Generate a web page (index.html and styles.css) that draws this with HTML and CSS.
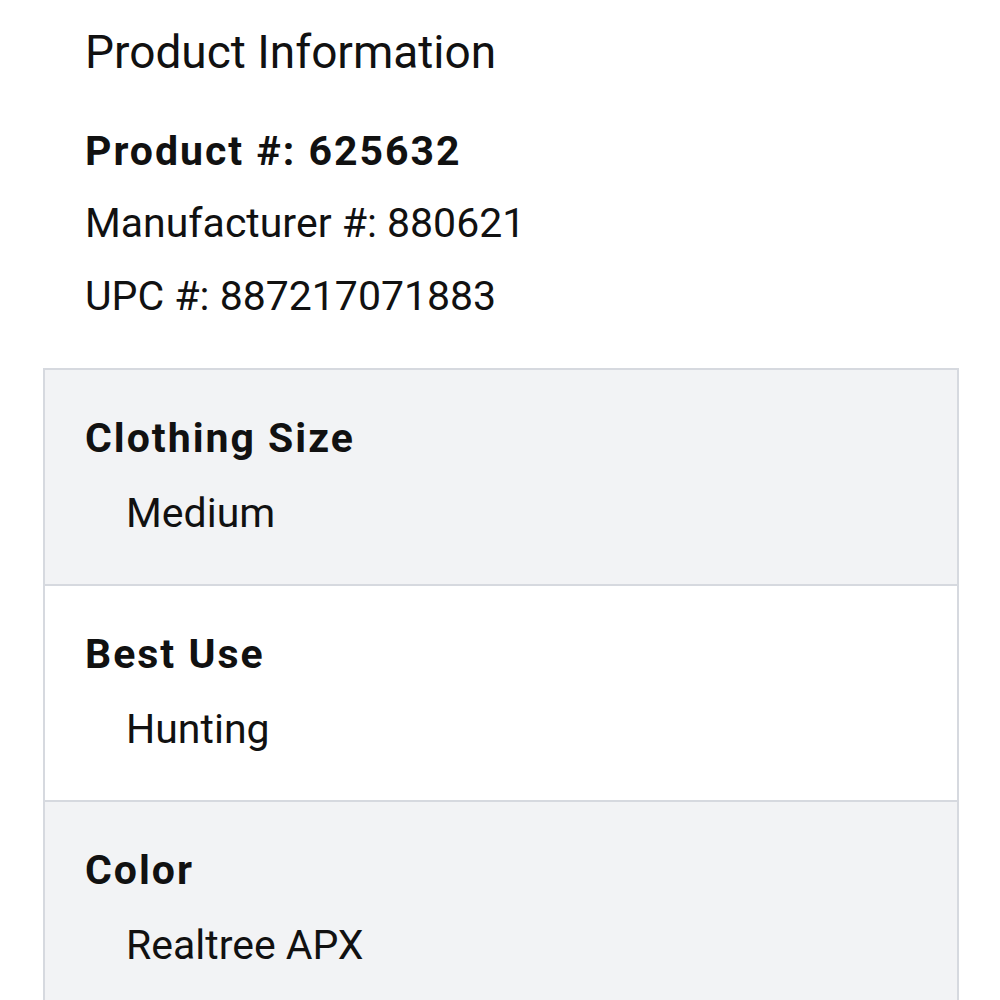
FILE: index.html
```html
<!DOCTYPE html>
<html>
<head>
    <meta charset="utf-8">
    <title>Product Information</title>
    <link rel="stylesheet" href="styles.css">
</head>
<body>
    <div class="page">
        <div class="info">
            <h1>Product Information</h1>
            <div class="product-id">Product #: 625632</div>
            <div class="code">Manufacturer #: 880621</div>
            <div class="code">UPC #: 887217071883</div>
        </div>

        <div class="specs">
            <div class="spec-row alt">
                <div class="spec-name">Clothing Size</div>
                <div class="spec-value">Medium</div>
            </div>
            <div class="spec-row">
                <div class="spec-name">Best Use</div>
                <div class="spec-value">Hunting</div>
            </div>
            <div class="spec-row alt">
                <div class="spec-name">Color</div>
                <div class="spec-value">Realtree APX</div>
            </div>
        </div>
    </div>
</body>
</html>
```

FILE: styles.css
```css
* {
    margin: 0;
    padding: 0;
    box-sizing: border-box;
}

body {
    font-family: Roboto, "Noto Sans", sans-serif;
    background: #fff;
    color: #111;
}

.page {
    padding: 0 41px 0 43px;
}

.info {
    padding: 25px 0 0 42px;
}

h1 {
    font-size: 46px;
    font-weight: 400;
    line-height: 54px;
    margin-bottom: 45px;
}

.product-id {
    font-size: 41px;
    font-weight: 700;
    letter-spacing: 2px;
    line-height: 54px;
    margin-bottom: 18px;
}

.code {
    font-size: 41px;
    line-height: 54px;
    margin-bottom: 19px;
}

.specs {
    margin-top: 45px;
    border: 2px solid #d6d9df;
    border-bottom: none;
}

.spec-row {
    height: 216px;
    padding: 41px 40px 0;
    border-bottom: 2px solid #d6d9df;
    background: #fff;
}

.spec-row.alt {
    background: #f2f3f5;
}

.spec-name {
    font-size: 41px;
    font-weight: 700;
    letter-spacing: 2px;
    line-height: 54px;
    margin-bottom: 21px;
}

.spec-value {
    font-size: 41px;
    line-height: 54px;
    padding-left: 41px;
}
```
